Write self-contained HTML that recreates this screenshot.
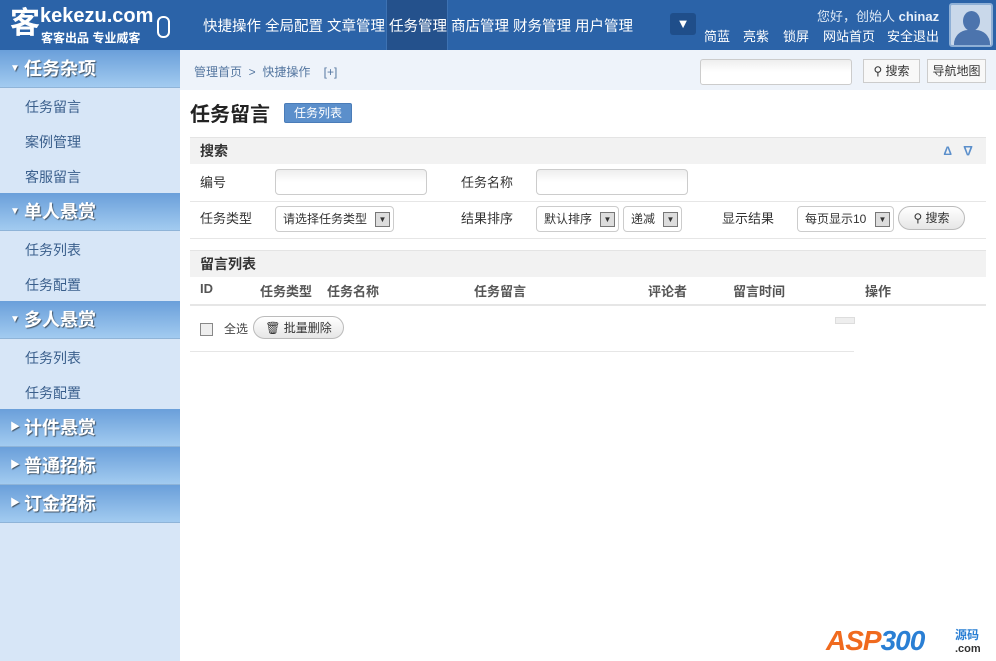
<!DOCTYPE html>
<html><head><meta charset="utf-8"><style>
*{margin:0;padding:0;box-sizing:border-box}
body{width:996px;height:661px;overflow:hidden;font-family:"Liberation Sans","Noto Sans CJK SC",sans-serif;font-size:13px;color:#333;background:#fff;position:relative}
.a{position:absolute}
#hd{left:0;top:0;width:996px;height:50px;background:#2b63a8}
.nav{color:#fff;font-size:14.5px;top:15px}
#sb{left:0;top:50px;width:180px;height:611px;background:#d7e6f7}
.sh{position:absolute;left:0;width:180px;height:38px;background:linear-gradient(#6a9fda,#a2cbf0);border-bottom:1px solid #8fb4d8;color:#fff;font-size:18px;font-weight:bold;line-height:38px;padding-left:24px;text-shadow:1px 1px 1px #456}
.sh i{position:absolute;left:10px;top:0;font-style:normal;font-size:10px}
.si{position:absolute;left:25px;color:#3a5f8c;font-size:14px}
.lb{color:#333;font-size:13px}
.inp{position:absolute;height:26px;border:1px solid #ccc;border-radius:4px;background:linear-gradient(#eee,#fff 50%)}
.sel{position:absolute;height:26px;border:1px solid #ccc;border-radius:4px;background:#fff;font-size:12px;line-height:24px;padding-left:7px;color:#333}
.sel b{position:absolute;right:3px;top:5px;width:15px;height:15px;border:1px solid #777;background:#ddd;font-size:8px;line-height:13px;text-align:center;font-weight:normal}
.btn{position:absolute;border:1px solid #bbb;border-radius:12px;background:linear-gradient(#fff,#e6e6e6);font-size:12px;line-height:22px;text-align:center}
.bar{position:absolute;left:190px;width:796px;height:27px;background:#f2f2f2;border-top:1px solid #e4e4e4;font-size:14px;font-weight:bold;line-height:27px;padding-left:10px}
.hl{position:absolute;height:1px;background:#e6e6e6}
.th{position:absolute;top:281px;font-weight:bold;font-size:13px;color:#555}
</style></head><body>
<div id="hd" class="a">
 <div class="a" style="left:10px;top:4px;width:30px;height:42px;color:#fff;font-size:30px;font-weight:bold;line-height:40px">客</div>
 <div class="a" style="left:40px;top:5px;color:#fff;font-size:20px;font-weight:bold">kekezu.com</div>
 <div class="a" style="left:41px;top:29px;color:#fff;font-size:12px;font-weight:bold">客客出品 专业威客</div>
 <div class="a" style="left:157px;top:16px;width:13px;height:22px;border:2px solid #fff;border-radius:6px"></div>
 <div class="a" style="left:386px;top:0;width:62px;height:50px;background:#24518c;border-left:1px solid #3d72b3;border-right:1px solid #3d72b3"></div>
 <div class="a nav" style="left:203px">快捷操作</div>
 <div class="a nav" style="left:265px">全局配置</div>
 <div class="a nav" style="left:327px">文章管理</div>
 <div class="a nav" style="left:389px">任务管理</div>
 <div class="a nav" style="left:451px">商店管理</div>
 <div class="a nav" style="left:513px">财务管理</div>
 <div class="a nav" style="left:575px">用户管理</div>
 <div class="a" style="left:670px;top:13px;width:26px;height:22px;background:#1f4e8a;border-radius:3px;color:#fff;text-align:center;line-height:22px;font-size:13px">▼</div>
 <div class="a" style="left:817px;top:6px;color:#dde8f5;font-size:13px">您好，创始人 <b style="color:#e8f0fa">chinaz</b></div>
 <div class="a" style="left:704px;top:26px;color:#fff;font-size:13px">简蓝</div>
 <div class="a" style="left:743px;top:26px;color:#fff;font-size:13px">亮紫</div>
 <div class="a" style="left:783px;top:26px;color:#fff;font-size:13px">锁屏</div>
 <div class="a" style="left:823px;top:26px;color:#fff;font-size:13px">网站首页</div>
 <div class="a" style="left:887px;top:26px;color:#fff;font-size:13px">安全退出</div>
 <div class="a" style="left:949px;top:3px;width:44px;height:44px;background:#c9d8ea;border:2px solid #8fb0d6;border-radius:3px;overflow:hidden">
  <div class="a" style="left:12px;top:6px;width:17px;height:20px;background:#4c74ad;border-radius:50%"></div>
  <div class="a" style="left:3px;top:25px;width:36px;height:20px;background:#4c74ad;border-radius:14px 14px 0 0"></div>
 </div>
</div>
<div id="sb" class="a">
 <div class="sh" style="top:0"><i>▼</i>任务杂项</div>
 <div class="si" style="top:47px">任务留言</div>
 <div class="si" style="top:82px">案例管理</div>
 <div class="si" style="top:117px">客服留言</div>
 <div class="sh" style="top:143px"><i>▼</i>单人悬赏</div>
 <div class="si" style="top:190px">任务列表</div>
 <div class="si" style="top:225px">任务配置</div>
 <div class="sh" style="top:251px"><i>▼</i>多人悬赏</div>
 <div class="si" style="top:298px">任务列表</div>
 <div class="si" style="top:333px">任务配置</div>
 <div class="sh" style="top:359px"><i>▶</i>计件悬赏</div>
 <div class="sh" style="top:397px"><i>▶</i>普通招标</div>
 <div class="sh" style="top:435px"><i>▶</i>订金招标</div>
</div>
<div class="a" style="left:180px;top:50px;width:816px;height:40px;background:#eef3fa"></div>
<div class="a" style="left:194px;top:63px;color:#5577a0;font-size:12px">管理首页 &nbsp;&gt;&nbsp; 快捷操作 &nbsp;&nbsp; [+]</div>
<div class="inp" style="left:700px;top:59px;width:152px;border-radius:3px"></div>
<div class="a" style="left:863px;top:59px;width:57px;height:24px;border:1px solid #ccc;background:#f8f8f8;font-size:12px;line-height:22px;text-align:center">⚲ 搜索</div>
<div class="a" style="left:927px;top:59px;width:59px;height:24px;border:1px solid #ccc;background:#f8f8f8;font-size:12px;line-height:22px;text-align:center">导航地图</div>
<div class="a" style="left:190px;top:98px;font-size:20px;font-weight:bold;color:#222">任务留言</div>
<div class="a" style="left:284px;top:103px;width:68px;height:20px;background:#5b8fcb;border:1px solid #4a7cb8;border-radius:2px;color:#fff;font-size:12px;line-height:18px;text-align:center">任务列表</div>
<div class="bar" style="top:137px">搜索<span class="a" style="right:12px;top:0;color:#5b8fcb;font-size:12px">Δ &nbsp; ∇</span></div>
<div class="a lb" style="left:200px;top:172px">编号</div>
<div class="inp" style="left:275px;top:169px;width:152px"></div>
<div class="a lb" style="left:461px;top:172px">任务名称</div>
<div class="inp" style="left:536px;top:169px;width:152px"></div>
<div class="hl" style="left:190px;top:201px;width:796px"></div>
<div class="a lb" style="left:200px;top:208px">任务类型</div>
<div class="sel" style="left:275px;top:206px;width:119px">请选择任务类型<b>▼</b></div>
<div class="a lb" style="left:461px;top:208px">结果排序</div>
<div class="sel" style="left:536px;top:206px;width:83px">默认排序<b>▼</b></div>
<div class="sel" style="left:623px;top:206px;width:59px">递减<b>▼</b></div>
<div class="a lb" style="left:722px;top:208px">显示结果</div>
<div class="sel" style="left:797px;top:206px;width:97px">每页显示10<b>▼</b></div>
<div class="btn" style="left:898px;top:206px;width:67px;height:24px">⚲ 搜索</div>
<div class="hl" style="left:190px;top:238px;width:796px"></div>
<div class="bar" style="top:250px">留言列表</div>
<div class="th" style="left:200px">ID</div>
<div class="th" style="left:260px">任务类型</div>
<div class="th" style="left:327px">任务名称</div>
<div class="th" style="left:474px">任务留言</div>
<div class="th" style="left:648px">评论者</div>
<div class="th" style="left:733px">留言时间</div>
<div class="th" style="left:865px">操作</div>
<div class="hl" style="left:190px;top:304px;width:796px;height:2px"></div>
<div class="a" style="left:200px;top:323px;width:13px;height:13px;border:1px solid #888;background:#eee"></div>
<div class="a" style="left:224px;top:320px;font-size:12px;color:#444">全选</div>
<div class="btn" style="left:253px;top:316px;width:91px;height:23px">🗑 批量删除</div>
<div class="a" style="left:835px;top:317px;width:20px;height:7px;background:#eee;border:1px solid #ddd"></div>
<div class="hl" style="left:190px;top:351px;width:664px"></div>
<div class="a" style="left:826px;top:625px;color:#f06a1e;font-size:28px;font-weight:bold;font-style:italic;letter-spacing:-1px">ASP<span style="color:#2a7fd4">300</span></div>
<div class="a" style="left:955px;top:626px;color:#2a7fd4;font-size:12px;font-weight:bold">源码</div>
<div class="a" style="left:955px;top:643px;color:#333;font-size:11px;font-weight:bold">.com</div>
</body></html>
